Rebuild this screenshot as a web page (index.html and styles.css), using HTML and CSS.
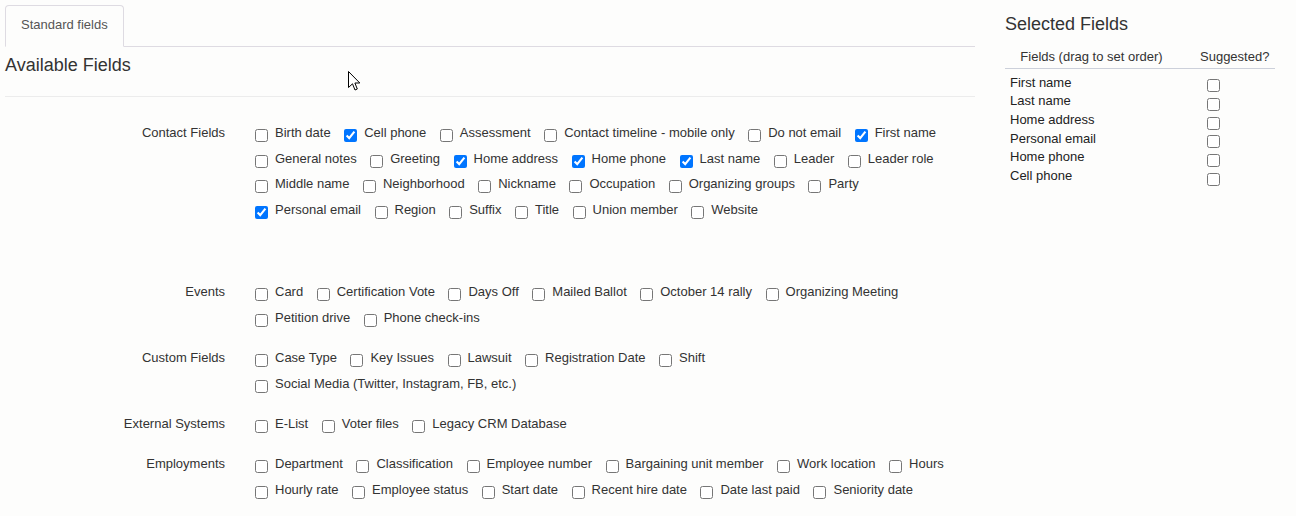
FILE: index.html
```html
<!DOCTYPE html>
<html lang="en">
<head>
<meta charset="utf-8">
<title>Fields</title>
<link rel="stylesheet" href="styles.css">
</head>
<body>
<div class="page">
  <main class="available">
    <nav class="tabs">
      <a class="tab active">Standard fields</a>
    </nav>
    <h2 class="section-title">Available Fields</h2>
    <hr class="divider">
    <div class="groups">
      <div class="group group-contact">
        <div class="group-label">Contact Fields</div>
        <div class="options">
          <label class="option"><input type="checkbox">Birth date</label>
          <label class="option"><input type="checkbox" checked>Cell phone</label>
          <label class="option"><input type="checkbox">Assessment</label>
          <label class="option"><input type="checkbox">Contact timeline - mobile only</label>
          <label class="option"><input type="checkbox">Do not email</label>
          <label class="option"><input type="checkbox" checked>First name</label>
          <label class="option"><input type="checkbox">General notes</label>
          <label class="option"><input type="checkbox">Greeting</label>
          <label class="option"><input type="checkbox" checked>Home address</label>
          <label class="option"><input type="checkbox" checked>Home phone</label>
          <label class="option"><input type="checkbox" checked>Last name</label>
          <label class="option"><input type="checkbox">Leader</label>
          <label class="option"><input type="checkbox">Leader role</label>
          <label class="option"><input type="checkbox">Middle name</label>
          <label class="option"><input type="checkbox">Neighborhood</label>
          <label class="option"><input type="checkbox">Nickname</label>
          <label class="option"><input type="checkbox">Occupation</label>
          <label class="option"><input type="checkbox">Organizing groups</label>
          <label class="option"><input type="checkbox">Party</label>
          <label class="option"><input type="checkbox" checked>Personal email</label>
          <label class="option"><input type="checkbox">Region</label>
          <label class="option"><input type="checkbox">Suffix</label>
          <label class="option"><input type="checkbox">Title</label>
          <label class="option"><input type="checkbox">Union member</label>
          <label class="option"><input type="checkbox">Website</label>
        </div>
      </div>
      <div class="group">
        <div class="group-label">Events</div>
        <div class="options">
          <label class="option"><input type="checkbox">Card</label>
          <label class="option"><input type="checkbox">Certification Vote</label>
          <label class="option"><input type="checkbox">Days Off</label>
          <label class="option"><input type="checkbox">Mailed Ballot</label>
          <label class="option"><input type="checkbox">October 14 rally</label>
          <label class="option"><input type="checkbox">Organizing Meeting</label>
          <label class="option"><input type="checkbox">Petition drive</label>
          <label class="option"><input type="checkbox">Phone check-ins</label>
        </div>
      </div>
      <div class="group">
        <div class="group-label">Custom Fields</div>
        <div class="options">
          <label class="option"><input type="checkbox">Case Type</label>
          <label class="option"><input type="checkbox">Key Issues</label>
          <label class="option"><input type="checkbox">Lawsuit</label>
          <label class="option"><input type="checkbox">Registration Date</label>
          <label class="option"><input type="checkbox">Shift</label>
          <label class="option"><input type="checkbox">Social Media (Twitter, Instagram, FB, etc.)</label>
        </div>
      </div>
      <div class="group">
        <div class="group-label">External Systems</div>
        <div class="options">
          <label class="option"><input type="checkbox">E-List</label>
          <label class="option"><input type="checkbox">Voter files</label>
          <label class="option"><input type="checkbox">Legacy CRM Database</label>
        </div>
      </div>
      <div class="group">
        <div class="group-label">Employments</div>
        <div class="options">
          <label class="option"><input type="checkbox">Department</label>
          <label class="option"><input type="checkbox">Classification</label>
          <label class="option"><input type="checkbox">Employee number</label>
          <label class="option"><input type="checkbox">Bargaining unit member</label>
          <label class="option"><input type="checkbox">Work location</label>
          <label class="option"><input type="checkbox">Hours</label>
          <label class="option"><input type="checkbox">Hourly rate</label>
          <label class="option"><input type="checkbox">Employee status</label>
          <label class="option"><input type="checkbox">Start date</label>
          <label class="option"><input type="checkbox">Recent hire date</label>
          <label class="option"><input type="checkbox">Date last paid</label>
          <label class="option"><input type="checkbox">Seniority date</label>
        </div>
      </div>
    </div>
  </main>
  <aside class="selected">
    <h2 class="selected-title">Selected Fields</h2>
    <table class="selected-table">
      <thead>
        <tr><th class="col-field">Fields (drag to set order)</th><th class="col-suggested">Suggested?</th></tr>
      </thead>
      <tbody>
        <tr><td class="cell-field">First name</td><td class="cell-check"><input type="checkbox"></td></tr>
        <tr><td class="cell-field">Last name</td><td class="cell-check"><input type="checkbox"></td></tr>
        <tr><td class="cell-field">Home address</td><td class="cell-check"><input type="checkbox"></td></tr>
        <tr><td class="cell-field">Personal email</td><td class="cell-check"><input type="checkbox"></td></tr>
        <tr><td class="cell-field">Home phone</td><td class="cell-check"><input type="checkbox"></td></tr>
        <tr><td class="cell-field">Cell phone</td><td class="cell-check"><input type="checkbox"></td></tr>
      </tbody>
    </table>
  </aside>
  <svg class="cursor" width="13" height="21" viewBox="0 0 13 21" aria-hidden="true">
    <path d="M0.5 0.5 L0.5 16.5 L4.5 12.8 L7 19 L9.3 18 L6.9 12 L11.8 12 Z" fill="#fff" stroke="#000" stroke-width="1" stroke-linejoin="miter"/>
  </svg>
</div>
</body>
</html>
```

FILE: styles.css
```css
* { box-sizing: border-box; }

html, body {
  margin: 0;
  padding: 0;
  background: #fdfdfc;
}

body {
  font-family: "Liberation Sans", Arial, sans-serif;
  font-size: 13px;
  line-height: 18px;
  color: #333;
}

.page {
  position: relative;
  display: flex;
  align-items: flex-start;
  gap: 30px;
  padding: 5px 0 0 5px;
}

.available {
  width: 970px;
  flex: none;
}

/* Tabs */
.tabs {
  display: flex;
  border-bottom: 1px solid #dedbe2;
}

.tab {
  display: block;
  margin-bottom: -1px;
  padding: 10px 15px 12px;
  border: 1px solid #dedbe2;
  border-bottom-color: transparent;
  border-radius: 4px 4px 0 0;
  background: #fdfdfc;
  color: #555;
  line-height: 18px;
}

.section-title {
  margin: 8px 0 0;
  font-size: 18px;
  line-height: 20px;
  font-weight: normal;
  color: #333;
}

.divider {
  margin: 21px 0 0;
  border: 0;
  border-top: 1px solid #ececec;
  height: 0;
}

/* Groups */
.groups {
  padding-top: 27px;
}

.group {
  display: grid;
  grid-template-columns: 220px 1fr;
  column-gap: 30px;
  margin-bottom: 22.2px;
}

.group-contact {
  margin-bottom: 64px;
}

.group-label {
  text-align: right;
  color: #333;
}

.options {
  display: flex;
  flex-wrap: wrap;
  column-gap: 13.5px;
  row-gap: 7.7px;
}

.option {
  display: flex;
  align-items: flex-start;
  white-space: nowrap;
  color: #333;
}

.option input {
  width: 13px;
  height: 13px;
  margin: 5px 7px 0 0;
  flex: none;
}

/* Selected fields */
.selected {
  width: 270px;
  flex: none;
}

.selected-title {
  margin: 9px 0 0;
  font-size: 18px;
  line-height: 20px;
  font-weight: normal;
  color: #333;
}

.selected-table {
  margin-top: 13.6px;
  width: 270px;
  border-collapse: collapse;
  table-layout: fixed;
}

.selected-table th {
  font-weight: normal;
  color: #333;
  padding: 0 0 2px;
  border-bottom: 1px solid #ccd0da;
  line-height: 18px;
  white-space: nowrap;
}

.col-field {
  width: 180px;
  text-align: center;
  padding-right: 7px !important;
}

.col-suggested {
  width: 90px;
  text-align: left;
  padding-left: 15px !important;
}

.selected-table tbody tr:first-child td {
  padding-top: 5px;
}

.selected-table td {
  padding: 0;
  height: 18.7px;
  line-height: 18.7px;
  vertical-align: top;
}

.cell-field {
  padding-left: 5px !important;
  color: #222;
}

.cell-check input {
  display: block;
  width: 13px;
  height: 13px;
  margin: 5.5px 0 0 22px;
}

.cursor {
  position: absolute;
  left: 348px;
  top: 71px;
}
```
